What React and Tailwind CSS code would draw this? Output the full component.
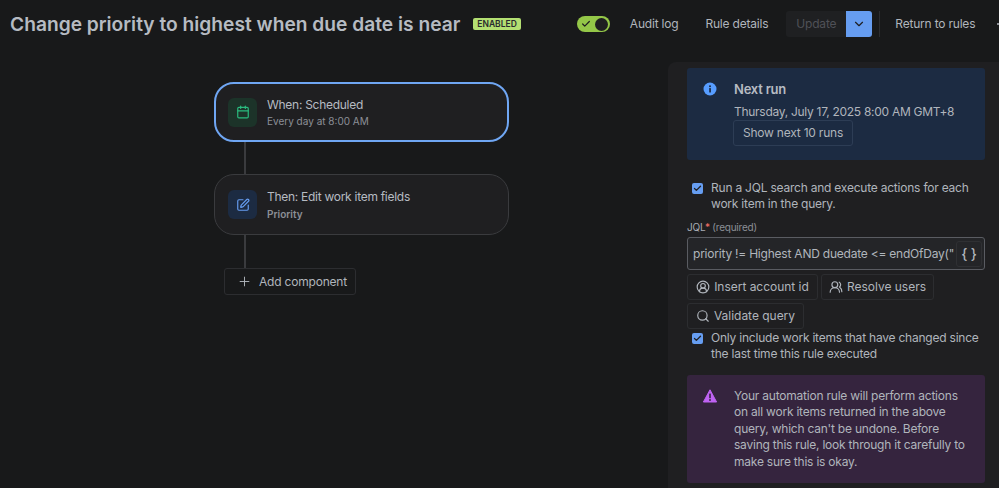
import React from "react";
import { Calendar, Check, ChevronDown, CircleUserRound, Plus, Search, SquarePen, UsersRound } from "lucide-react";

function Checkbox() {
  return (
    <span className="w-[11px] h-[11px] rounded-[2px] bg-[#669df1] flex items-center justify-center shrink-0 mt-[3px]">
      <Check size={9} strokeWidth={3.5} className="text-[#1f1f21]" />
    </span>
  );
}

function Button({ icon, children, className = "" }) {
  return (
    <button className={`h-[26px] flex items-center justify-center gap-[4px] rounded-[3px] border border-[#2c2d30] text-[12px] tracking-[-0.02px] text-[#b0b5bc] whitespace-nowrap ${className}`}>
      {icon}
      {children}
    </button>
  );
}

function Node({ active, iconBg, icon, title, subtitle, subClass, height, gap }) {
  return (
    <div className={`w-[295px] rounded-[20px] bg-[#1f1f21] flex items-center gap-[10px] ${height} ${active ? "border-2 border-[#6fa6f3] pl-[12px]" : "border border-[#3a3b3e] pl-[13px]"}`}>
      <div className={`w-[29px] h-[29px] rounded-[6px] flex items-center justify-center ${iconBg}`}>{icon}</div>
      <div className={`flex flex-col ${gap}`}>
        <span className="text-[12px] tracking-[-0.28px] leading-[17px] text-[#b6bbc2]">{title}</span>
        <span className={`text-[10px] leading-[15px] ${subClass}`}>{subtitle}</span>
      </div>
    </div>
  );
}

export default function App() {
  return (
    <div className="w-[999px] h-[488px] overflow-hidden flex flex-col bg-[#18191a] font-['Inter',sans-serif]">
      <header className="h-[48px] shrink-0 flex items-center relative">
        <h1 className="ml-[10px] text-[19.2px] font-semibold text-[#b6bbc2] whitespace-nowrap">
          Change priority to highest when due date is near
        </h1>
        <span className="ml-[13px] h-[12px] px-[4px] rounded-[2px] bg-[#b3df72] text-[#292a2e] text-[8.5px] font-semibold leading-[12px]">
          ENABLED
        </span>
        <div className="ml-[56px] w-[33px] h-[16px] rounded-full bg-[#94c748] flex items-center justify-between px-[2px] shrink-0">
          <Check size={10} strokeWidth={3} className="text-[#1f1f21] ml-[2px]" />
          <span className="w-[13px] h-[13px] rounded-full bg-[#1f1f21]" />
        </div>
        <span className="ml-[20px] text-[12px] tracking-[-0.2px] text-[#b0b5bc] whitespace-nowrap">Audit log</span>
        <span className="ml-[27px] text-[12px] tracking-[-0.2px] text-[#b0b5bc] whitespace-nowrap">Rule details</span>
        <div className="ml-[18px] flex h-[26px] shrink-0">
          <div className="w-[60px] bg-[#1f2022] rounded-l-[3px] text-[12px] tracking-[-0.2px] text-[#4f5157] flex items-center justify-center">Update</div>
          <div className="w-[26px] bg-[#669df1] rounded-r-[3px] flex items-center justify-center">
            <ChevronDown size={14} strokeWidth={2} className="text-[#1f1f21]" />
          </div>
        </div>
        <div className="ml-[7px] w-px h-[26px] bg-[#2c2d30] shrink-0" />
        <span className="ml-[15px] text-[12px] tracking-[-0.2px] text-[#b0b5bc] whitespace-nowrap">Return to rules</span>
        <span className="absolute left-[997px] top-[23px] w-[2px] h-[2px] rounded-full bg-[#b0b5bc]" />
      </header>

      <main className="flex-1 flex min-h-0">
        <section className="w-[668px] shrink-0 pl-[214px] pt-[34px] flex flex-col">
          <Node
            active
            height="h-[60px]"
            gap="gap-[1px]"
            iconBg="bg-[#1c3329]"
            icon={<Calendar size={14} className="text-[#2abb7f]" />}
            title="When: Scheduled"
            subtitle="Every day at 8:00 AM"
            subClass="text-[#8c8f97]"
          />
          <div className="ml-[30px] w-[2px] h-[32px] bg-[#3a3b3e]" />
          <Node
            height="h-[61px]"
            gap="gap-[2px]"
            iconBg="bg-[#1c2b42]"
            icon={<SquarePen size={14} className="text-[#669df1]" />}
            title="Then: Edit work item fields"
            subtitle="Priority"
            subClass="text-[#8c8f97] font-semibold"
          />
          <div className="ml-[30px] w-[2px] h-[33px] bg-[#3a3b3e]" />
          <button className="ml-[10px] w-[132px] h-[27px] rounded-[3px] border border-[#2c2d30] flex items-center gap-[7px] pl-[12px] text-[12px] tracking-[-0.2px] text-[#b0b5bc] whitespace-nowrap">
            <Plus size={15} strokeWidth={1.5} />
            Add component
          </button>
        </section>

        <aside className="flex-1 mt-[14px] bg-[#1f1f21] rounded-tl-[8px] pl-[19px] pr-[14px] pt-[6px] flex flex-col tracking-[-0.22px]">
          <div className="h-[92px] shrink-0 rounded-[3px] bg-[#1c2b42] flex pl-[16px] pt-[13px] gap-[17px]">
            <svg width="14" height="14" viewBox="0 0 14 14" className="mt-[1px] shrink-0">
              <circle cx="7" cy="7" r="6.5" fill="#579dff" />
              <rect x="6.2" y="6" width="1.7" height="4.5" rx=".5" fill="#1c2b42" />
              <circle cx="7" cy="4.2" r="1" fill="#1c2b42" />
            </svg>
            <div className="flex flex-col">
              <span className="text-[13px] leading-[16px] font-semibold text-[#b6bbc2]">Next run</span>
              <span className="mt-[7px] text-[12px] tracking-[-0.28px] leading-[16px] text-[#b0b5bc] whitespace-nowrap">Thursday, July 17, 2025 8:00 AM GMT+8</span>
              <button className="-ml-[1px] w-[120px] h-[26px] rounded-[3px] border border-[#2d3d55] text-[12px] text-[#b0b5bc] whitespace-nowrap">Show next 10 runs</button>
            </div>
          </div>

          <label className="mt-[20px] ml-[5px] flex gap-[8px] text-[12px] leading-[16px] text-[#b0b5bc]">
            <Checkbox />
            <span>Run a JQL search and execute actions for each work item in the query.</span>
          </label>

          <div className="mt-[8px] text-[10px] leading-[14px] text-[#a9adb5]">
            JQL<span className="text-[#f87168]">*</span> <span className="text-[#8c8f97]">(required)</span>
          </div>
          <div className="mt-[3px] h-[33px] shrink-0 rounded-[3px] border border-[#5a5c62] bg-[#242528] flex items-center pl-[5px] pr-[2px] justify-between">
            <span className="text-[12px] text-[#b0b5bc] whitespace-nowrap overflow-hidden">priority != Highest AND duedate &lt;= endOfDay("</span>
            <span className="w-[26px] h-[26px] shrink-0 rounded-[3px] border border-[#2f3033] flex items-center justify-center text-[14px] font-medium text-[#b0b5bc]">{"{ }"}</span>
          </div>
          <div className="mt-[4px] flex gap-[3px]">
            <Button className="w-[131px]" icon={<CircleUserRound size={14} />}>Insert account id</Button>
            <Button className="w-[113px]" icon={<UsersRound size={14} />}>Resolve users</Button>
          </div>
          <Button className="mt-[3px] w-[117px] shrink-0" icon={<Search size={14} />}>Validate query</Button>

          <label className="mt-[1px] ml-[5px] flex gap-[8px] text-[12px] leading-[16px] text-[#b0b5bc]">
            <Checkbox />
            <span>Only include work items that have changed since the last time this rule executed</span>
          </label>

          <div className="mt-[13px] h-[108px] shrink-0 rounded-[3px] bg-[#35243e] flex pl-[16px] pr-[15px] pt-[13px] gap-[17px]">
            <svg width="14" height="14" viewBox="0 0 14 14" className="mt-[1px] shrink-0">
              <path d="M7 .8 13.6 13H.4Z" fill="#bf63f3" stroke="#bf63f3" strokeLinejoin="round" />
              <rect x="6.2" y="4.6" width="1.6" height="4.6" rx=".5" fill="#35243e" />
              <circle cx="7" cy="11" r=".95" fill="#35243e" />
            </svg>
            <p className="text-[12px] leading-[16.4px] text-[#b0b5bc]">
              Your automation rule will perform actions on all work items returned in the above query, which can't be undone. Before saving this rule, look through it carefully to make sure this is okay.
            </p>
          </div>
        </aside>
      </main>
    </div>
  );
}
